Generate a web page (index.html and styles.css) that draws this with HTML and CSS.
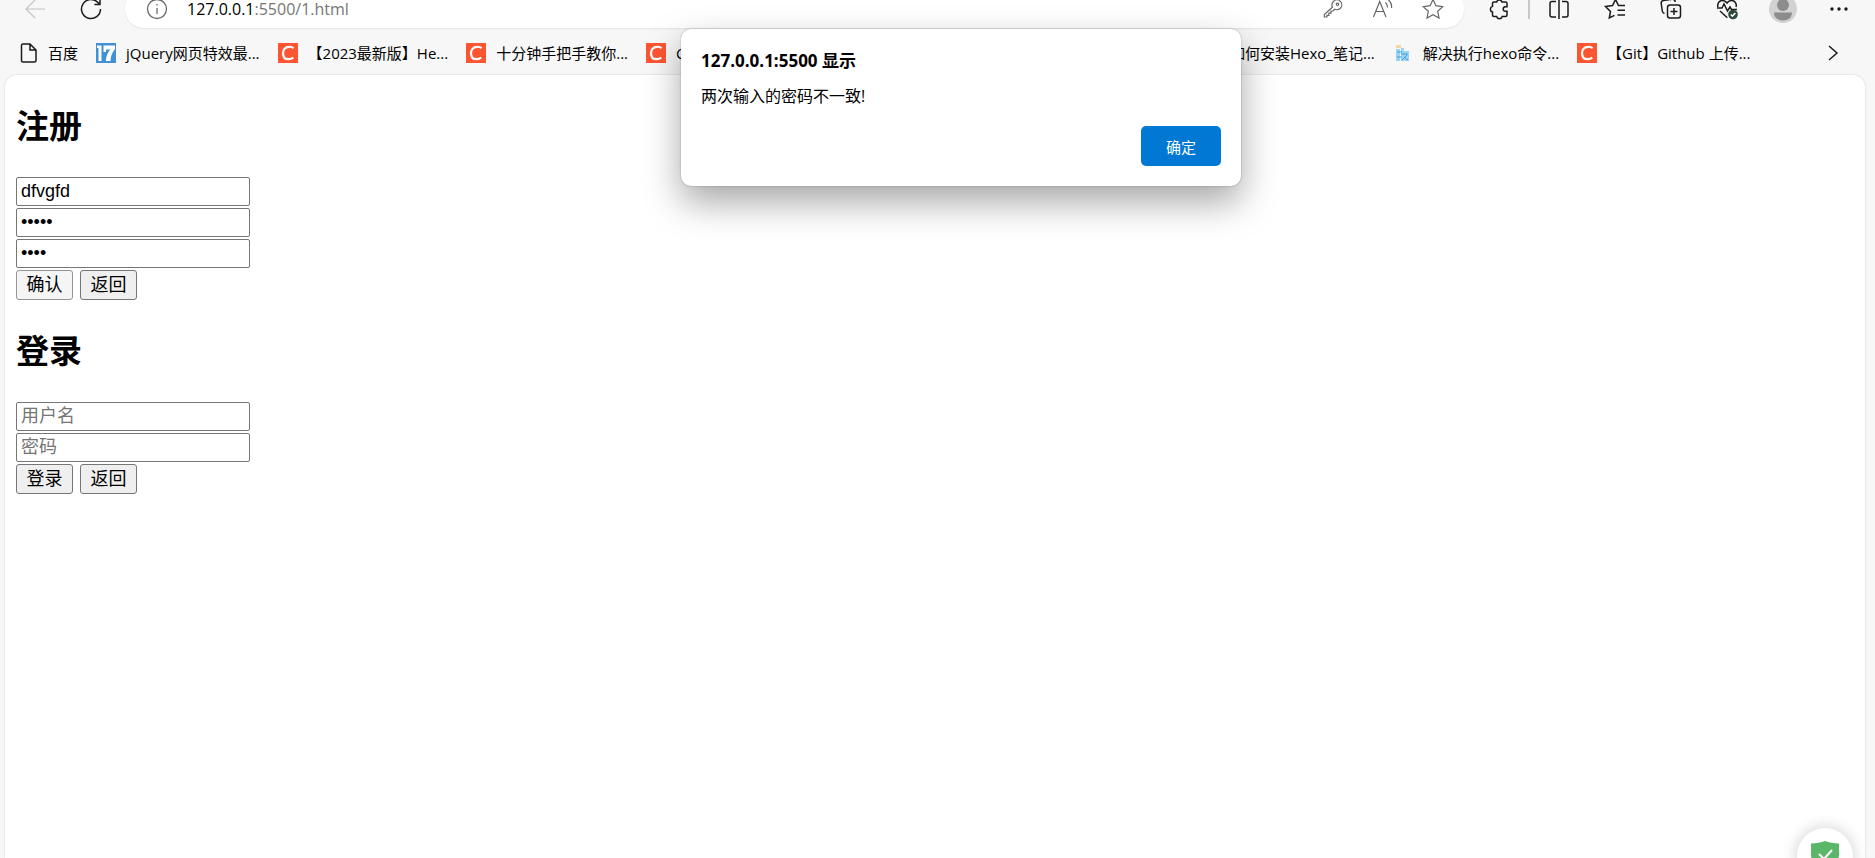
FILE: index.html
```
<!DOCTYPE html>
<html lang="zh-CN">
<head>
    <meta charset="UTF-8">
    <meta name="viewport" content="width=device-width, initial-scale=1.0">
    <title>注册</title>
    <link rel="stylesheet" href="styles.css">
</head>
<body>
    <svg class="symbols" width="0" height="0" aria-hidden="true">
        <symbol id="csdn" viewBox="0 0 20 20">
            <rect width="20" height="20" fill="#fc5531"/>
            <path d="M15.6 5.3A5.9 5.9 0 0 0 11 3.8C7.300 3.900 5 6.600 5 10.200c0 3.600 2.100 6 5.600 6a7.500 7.500 0 0 0 4.700-1.500" fill="none" stroke="#fff" stroke-width="2.200"/>
        </symbol>
    </svg>

    <header class="toolbar">
        <button class="tool back" aria-label="后退">
            <svg width="24" height="24" viewBox="0 0 24 24"><path d="M22 12H3M12 3l-9 9 9 9"/></svg>
        </button>
        <button class="tool" aria-label="刷新">
            <svg class="bold" width="24" height="24" viewBox="0 0 24 24"><path d="M21.500 12A9.500 9.500 0 1 1 19 5.600L20.500 7.200M21 2v5.600h-5.600"/></svg>
        </button>
        <div class="address">
            <svg class="info" width="22" height="22" viewBox="0 0 22 22"><circle cx="11" cy="11" r="9.500"/><path d="M11 10v6M11 6v1.600"/></svg>
            <span class="url">127.0.0.1<span class="path">:5500/1.html</span></span>
            <button class="tool" aria-label="密码">
                <svg width="24" height="24" viewBox="0 0 24 24"><path d="M11.300 10.300C10.500 8 11 5.800 12.600 4.300c2-1.800 5-1.700 6.800.1s1.900 4.800.1 6.700c-1.500 1.600-3.700 2-5.900 1.200L12 14h-2v2.200H7.900v2.200H6V20H3.300v-2.500z"/><circle cx="16.500" cy="7.300" r="1.200"/></svg>
            </button>
            <button class="tool" aria-label="大声朗读">
                <svg width="24" height="24" viewBox="0 0 24 24"><path d="M2.500 20L8.700 4.500 15 20M4.800 14.500h7.900M14.500 5.500c1.500 1.300 2 3 1.900 5M17.500 3c2.500 2 3.500 4.800 3 8"/></svg>
            </button>
            <button class="tool" aria-label="收藏此页">
                <svg width="24" height="24" viewBox="0 0 24 24"><path d="M12 2.500l2.900 6.200 6.800.9-5 4.700 1.300 6.700-6-3.300L6 21l1.300-6.700-5-4.700 6.800-.9z"/></svg>
            </button>
        </div>
        <button class="tool" aria-label="扩展">
            <svg class="bold" width="24" height="24" viewBox="0 0 24 24"><path d="M6.500 5h3.200a2.700 2.700 0 0 1 5.200 0h3.600A1.500 1.500 0 0 1 20 6.500v3.200h-1.500a2.300 2.300 0 0 0 0 4.600H20V18a1.500 1.500 0 0 1-1.500 1.500h-3.300a2.900 2.900 0 0 1-5.600 0H7A1.500 1.500 0 0 1 5.500 18v-3a2.900 2.900 0 0 1 0-5.600V6.500A1.500 1.500 0 0 1 7 5z"/></svg>
        </button>
        <span class="divider"></span>
        <button class="tool" aria-label="拆分屏幕">
            <svg class="bold" width="24" height="24" viewBox="0 0 24 24"><path d="M9 4.500H5a2 2 0 0 0-2 2V18a2 2 0 0 0 2 2h4M15 4.500h4a2 2 0 0 1 2 2V18a2 2 0 0 1-2 2h-4M12 2v20"/></svg>
        </button>
        <button class="tool" aria-label="收藏夹">
            <svg class="bold" width="24" height="24" viewBox="0 0 24 24"><path d="M22 8.500h-6.500l-3-6-3 6-7 1 5 5L6.300 21l5.200-2.600M14.500 13.300H22M14.500 18H22"/></svg>
        </button>
        <button class="tool" aria-label="集锦">
            <svg class="bold" width="24" height="24" viewBox="0 0 24 24"><rect x="8.500" y="8" width="13" height="13" rx="2.500"/><path d="M15 11v7M11.500 14.500h7M5.500 16.500c-1.200-.3-2-1.200-2.200-2.500L2.200 6.500C2 4.800 3 3.700 4.500 3.500L13 2.300c1.800-.2 3 .6 3.300 2.500"/></svg>
        </button>
        <button class="tool" aria-label="浏览器概要">
            <svg class="bold" width="24" height="24" viewBox="0 0 24 24"><path d="M3 10c-1-3 1-6.500 4.300-6.500 2 0 3.500.8 4.700 2.500 1.200-1.700 2.700-2.500 4.700-2.500C20 3.500 22 7 21 10M2 11h5l2-4 3.500 7 2.500-4 1.500 2.500H22M5 14l7.300 6.800"/><circle class="badge" cx="18" cy="17.500" r="4.800"/><path class="tick" d="M15.800 17.500l1.600 1.600 3-3.200"/></svg>
        </button>
        <button class="tool" aria-label="个人资料">
            <svg class="avatar" width="28" height="28" viewBox="0 0 28 28"><circle cx="14" cy="14" r="14" fill="#d2d2d2"/><circle cx="14" cy="10" r="6" fill="#8c8c8c"/><path d="M5 17.500h18c0 5-4 8-9 8s-9-3-9-8z" fill="#8c8c8c"/></svg>
        </button>
        <button class="tool" aria-label="设置及其他">
            <svg class="dots" width="24" height="24" viewBox="0 0 24 24"><circle cx="5" cy="12" r="1.700"/><circle cx="12" cy="12" r="1.700"/><circle cx="19" cy="12" r="1.700"/></svg>
        </button>
    </header>

    <nav class="bookmarks">
        <a href="#"><svg class="file" width="18" height="20" viewBox="0 0 18 20"><path d="M3 1h7l6 6v10.500a1.500 1.500 0 0 1-1.500 1.500h-11.500A1.500 1.500 0 0 1 1.500 17.500v-15A1.500 1.500 0 0 1 3 1zM10 1v6h6"/></svg><span>百度</span></a>
        <a href="#"><svg width="20" height="20" viewBox="0 0 20 20"><rect width="20" height="20" fill="#4390d4"/><path d="M1 2.500h4.500V18H2.500V5H1zM7.500 2.500H19V6c-3 3.500-4.300 7.500-4.500 12H9.800c.2-4.800 1.800-8.300 4.500-11.500H10V9H7.500z" fill="#fff"/></svg><span>jQuery网页特效最...</span></a>
        <a href="#"><svg width="20" height="20"><use href="#csdn"/></svg><span>【2023最新版】He...</span></a>
        <a href="#"><svg width="20" height="20"><use href="#csdn"/></svg><span>十分钟手把手教你...</span></a>
        <a href="#" class="covered"><svg width="20" height="20"><use href="#csdn"/></svg><span>C...</span></a>
        <a href="#"><svg width="20" height="20"><use href="#csdn"/></svg><span>如何安装Hexo_笔记...</span></a>
        <a href="#"><svg width="20" height="20" viewBox="0 0 20 20"><path d="M3 2h5v3H3z" fill="#f3d6a8"/><path d="M3 6h4v12H3zM8 5h3v3h5v10H8z" fill="#9bd3f5"/><path d="M4 9h5M8 11h7M9 17l5-5M4 14h5M11 14l4 3" stroke="#3d9fe0" fill="none"/></svg><span>解决执行hexo命令...</span></a>
        <a href="#"><svg width="20" height="20"><use href="#csdn"/></svg><span>【Git】Github 上传...</span></a>
        <button class="more" aria-label="更多书签">
            <svg width="12" height="18" viewBox="0 0 12 18"><path d="M2 2l8 7-8 7"/></svg>
        </button>
    </nav>

    <main class="page">
        <form class="account">
            <h2>注册</h2>
            <input type="text" value="dfvgfd" aria-label="用户名">
            <input type="password" value="12345" aria-label="密码">
            <input type="password" value="1234" aria-label="确认密码">
            <div class="actions">
                <button type="button" class="pressed">确认</button>
                <button type="button">返回</button>
            </div>
        </form>
        <form class="account">
            <h2>登录</h2>
            <input type="text" placeholder="用户名" aria-label="用户名">
            <input type="password" placeholder="密码" aria-label="密码">
            <div class="actions">
                <button type="button">登录</button>
                <button type="button">返回</button>
            </div>
        </form>
    </main>

    <div class="alert" role="alertdialog" aria-labelledby="alertTitle">
        <h1 id="alertTitle">127.0.0.1:5500 显示</h1>
        <p>两次输入的密码不一致!</p>
        <button id="alertOk">确定</button>
    </div>

    <button class="shield" aria-label="安全">
        <svg width="30" height="32" viewBox="0 0 30 32"><path d="M1 3.500C6 3.500 11 2.500 15 1c4 1.500 9 2.500 14 2.500V15c0 8-6 13-14 16C7 28 1 23 1 15z" fill="#5bb768"/><path d="M9 14l5 5 8-9" fill="none" stroke="#fff" stroke-width="2"/></svg>
    </button>

    <script>
        const alertBox = document.querySelector('.alert');

        document.getElementById('alertOk').addEventListener('click', () => {
            alertBox.style.display = 'none';
        });
    </script>
</body>
</html>
```
FILE: styles.css
```
* {
    box-sizing: border-box;
}

body {
    display: flex;
    flex-direction: column;
    height: 100vh;
    margin: 0;
    overflow: hidden;
    background-color: #f7f7f7;
    font-family: "Open Sans", "Noto Sans CJK SC", sans-serif;
    color: #000;
}

button {
    font-family: inherit;
}

.symbols {
    position: absolute;
}

/* toolbar */
.toolbar {
    display: flex;
    align-items: center;
    flex: none;
    height: 38px;
    margin-top: -10px;
    padding: 0 8px 0 7px;
}

.tool {
    display: flex;
    align-items: center;
    justify-content: center;
    flex: none;
    width: 56px;
    height: 38px;
    padding: 0;
    border: none;
    background: none;
}

.tool svg {
    fill: none;
    stroke: #666;
    stroke-width: 1.2;
}

.tool .bold {
    stroke: #1b1b1b;
    stroke-width: 1.5;
}

.back svg {
    stroke: #c4c4c4;
}

.tool .avatar {
    stroke: none;
}

.tool .dots {
    fill: #1b1b1b;
    stroke: none;
}

.tool .badge {
    fill: #2c4a3a;
    stroke: none;
}

.tool .tick {
    stroke: #fff;
}

.address {
    display: flex;
    align-items: center;
    flex: 1;
    height: 38px;
    margin: 0 7px 0 6px;
    padding: 0 6px 0 21px;
    border-radius: 19px;
    background-color: #fff;
    box-shadow: 0 1px 2px rgba(0, 0, 0, 0.08);
}

.address .tool {
    width: 50px;
}

.info {
    fill: none;
    stroke: #6b6b6b;
    stroke-width: 1.3;
}

.url {
    flex: 1;
    margin-left: 19px;
    font-size: 16px;
}

.path {
    color: #767676;
}

.divider {
    width: 2px;
    height: 20px;
    margin: 0 1px;
    background-color: #c8c8c8;
}

/* bookmarks */
.bookmarks {
    display: flex;
    align-items: center;
    flex: none;
    gap: 18px;
    height: 47px;
    padding: 2px 36px 0 20px;
    white-space: nowrap;
}

.bookmarks a {
    display: flex;
    align-items: center;
    gap: 10px;
    color: #000;
    font-size: 15px;
    text-decoration: none;
}

.bookmarks .covered {
    flex: 0 0 536px;
}

.bookmarks svg {
    flex: none;
}

.file, .more svg {
    fill: none;
    stroke: #1b1b1b;
    stroke-width: 1.5;
}

.more {
    display: flex;
    margin-left: auto;
    padding: 0;
    border: none;
    background: none;
}

/* page */
.page {
    flex: 1;
    margin: 0 10px 0 5px;
    padding: 28px 11px;
    border-radius: 12px 12px 0 0;
    background-color: #fff;
    box-shadow: 0 0 2px rgba(0, 0, 0, 0.2);
}

.account {
    display: flex;
    flex-direction: column;
    align-items: flex-start;
    gap: 2px;
    margin-bottom: 28px;
    font-family: "Liberation Sans", "Noto Sans CJK SC", sans-serif;
}

.account h2 {
    margin: 0 0 24px;
    font-size: 33px;
    line-height: 48px;
}

.account input {
    width: 234px;
    height: 29px;
    padding: 1px 4px;
    border: 1px solid #767676;
    border-radius: 2px;
    font-family: inherit;
    font-size: 18px;
}

.account input::placeholder {
    color: #757575;
}

.actions {
    display: flex;
    gap: 7px;
}

.actions button {
    width: 57px;
    height: 30px;
    padding: 0;
    border: 1px solid #767676;
    border-radius: 3px;
    background-color: #efefef;
    color: #000;
    font-size: 18px;
    line-height: 26px;
}

.actions .pressed {
    border-color: #949494;
    background-color: #f5f5f5;
}

/* alert */
.alert {
    position: absolute;
    top: 29px;
    left: 681px;
    display: flex;
    flex-direction: column;
    width: 560px;
    padding: 20px;
    border-radius: 10px;
    background-color: #fff;
    box-shadow: 0 0 2px rgba(0, 0, 0, 0.3), 0 16px 36px rgba(0, 0, 0, 0.35);
}

.alert h1 {
    margin: 0;
    font-size: 17px;
    line-height: 24px;
}

.alert p {
    margin: 12px 0 18px;
    font-size: 16px;
    line-height: 23px;
}

.alert button {
    align-self: flex-end;
    width: 80px;
    height: 40px;
    border: none;
    border-radius: 5px;
    background-color: #0078d4;
    color: #fff;
    font-size: 15px;
}

.shield {
    position: absolute;
    right: 22px;
    bottom: -26px;
    display: flex;
    align-items: center;
    justify-content: center;
    width: 56px;
    height: 56px;
    padding: 0;
    border: none;
    border-radius: 50%;
    background-color: #fff;
    box-shadow: 0 0 16px rgba(0, 0, 0, 0.2);
}
```
